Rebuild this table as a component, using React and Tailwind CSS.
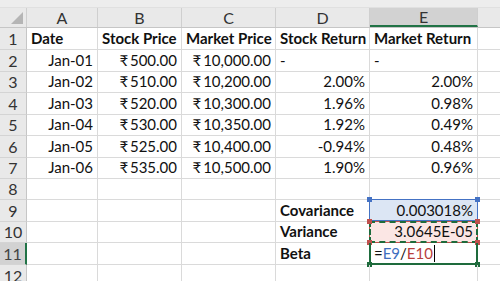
import React from 'react'

const cols = [71, 84, 94, 94, 108]
const rowHeights = [22, 22, 21, 22, 21, 22, 21, 21, 22, 21, 22, 22]
const R = '₹\u2009'

const rows = [
  [
    { t: 'Date', b: true },
    { t: 'Stock Price', b: true },
    { t: 'Market Price', b: true },
    { t: 'Stock Return', b: true },
    { t: 'Market Return', b: true },
  ],
  [{ t: 'Jan-01', r: true }, { t: R + '500.00', r: true }, { t: R + '10,000.00', r: true }, { t: '-' }, { t: '-' }],
  [{ t: 'Jan-02', r: true }, { t: R + '510.00', r: true }, { t: R + '10,200.00', r: true }, { t: '2.00%', r: true }, { t: '2.00%', r: true }],
  [{ t: 'Jan-03', r: true }, { t: R + '520.00', r: true }, { t: R + '10,300.00', r: true }, { t: '1.96%', r: true }, { t: '0.98%', r: true }],
  [{ t: 'Jan-04', r: true }, { t: R + '530.00', r: true }, { t: R + '10,350.00', r: true }, { t: '1.92%', r: true }, { t: '0.49%', r: true }],
  [{ t: 'Jan-05', r: true }, { t: R + '525.00', r: true }, { t: R + '10,400.00', r: true }, { t: '-0.94%', r: true }, { t: '0.48%', r: true }],
  [{ t: 'Jan-06', r: true }, { t: R + '535.00', r: true }, { t: R + '10,500.00', r: true }, { t: '1.90%', r: true }, { t: '0.96%', r: true }],
  [{}, {}, {}, {}, {}],
  [{}, {}, {}, { t: 'Covariance', b: true }, { t: '0.003018%', r: true, sel: 'blue' }],
  [{}, {}, {}, { t: 'Variance', b: true }, { t: '3.0645E-05', r: true, sel: 'red' }],
  [{}, {}, {}, { t: 'Beta', b: true }, { sel: 'edit' }],
  [{}, {}, {}, {}, {}],
]

// small square grips at the corners of a selection
function Handle({ className }) {
  return <span className={`absolute w-[5px] h-[5px] ${className}`} />
}

function Cell({ c, w, h }) {
  const base = 'relative shrink-0 border-r border-b border-[#dadada] flex items-end pb-[2px] px-[4px] text-[15px] leading-[18px] text-[#111] whitespace-nowrap'
  let extra = ''
  if (c.sel === 'blue') extra = 'bg-[#dce6f4]'
  if (c.sel === 'red') extra = 'bg-[#fbe6e4]'
  return (
    <div className={`${base} ${c.r ? 'justify-end' : 'justify-start'} ${c.b ? 'font-bold' : ''} ${extra}`} style={{ width: w, height: h }}>
      {c.sel === 'edit' ? (
        <span className="flex items-end">
          <span>=</span>
          <span className="text-[#3f6fbf]">E9</span>
          <span>/</span>
          <span className="text-[#b8403c]">E10</span>
          <span className="w-[1px] h-[17px] bg-black ml-[1px]" />
        </span>
      ) : (
        <span>{c.t}</span>
      )}
      {c.sel === 'blue' && (
        <>
          <span className="absolute left-[-1px] top-[-1px] right-[-1px] bottom-0 border border-[#4472c4]" />
          <Handle className="bg-[#4472c4] left-[-3px] top-[-3px]" />
          <Handle className="bg-[#4472c4] right-[-3px] top-[-3px]" />
        </>
      )}
      {c.sel === 'red' && (
        <>
          <span className="absolute left-[-1px] top-[-1px] right-[-1px] bottom-[-1px] border border-[#c0504d]" />
          <span className="absolute left-[-1px] top-[-1px] right-[-1px] bottom-[-1px] border-2 border-dashed border-[#1e6b3c]" />
          <Handle className="bg-[#c0504d] left-[-3px] top-[-3px]" />
          <Handle className="bg-[#c0504d] right-[-3px] top-[-3px]" />
          <Handle className="bg-[#c0504d] left-[-3px] bottom-[-3px]" />
          <Handle className="bg-[#c0504d] right-[-3px] bottom-[-3px]" />
        </>
      )}
      {c.sel === 'edit' && (
        <>
          <span className="absolute left-[-1px] top-0 right-[-1px] bottom-[-1px] border-2 border-t-0 border-[#1e6b3c]" />
          <Handle className="bg-[#1e6b3c] right-[-3px] bottom-[-3px]" />
          <Handle className="bg-[#1e6b3c] left-[-3px] bottom-[-3px]" />
        </>
      )}
    </div>
  )
}

export default function App() {
  const font = { fontFamily: 'Lato, "Open Sans", sans-serif' }
  return (
    <div className="w-[500px] h-[281px] overflow-hidden bg-white" style={font}>
      <div className="h-[8px] bg-[#ededed] border-b border-[#e0e0e0]" />
      {/* column headers */}
      <div className="flex h-[20px] bg-[#e9e9e9] border-b border-[#c6c6c6]">
        <div className="relative w-[27px] shrink-0 border-r border-[#cfcfcf]">
          <span className="absolute right-[3px] bottom-[3px] w-0 h-0 border-l-[12px] border-l-transparent border-b-[12px] border-b-[#b5b5b5]" />
        </div>
        {['A', 'B', 'C', 'D', 'E'].map((l, i) => (
          <div
            key={l}
            className={`shrink-0 flex items-center justify-center text-[16px] text-[#333] border-r border-[#cfcfcf] ${l === 'E' ? 'bg-[#d2d2d2] border-b-2 border-b-[#217346] text-[#1f5e38]' : ''}`}
            style={{ width: cols[i] }}
          >
            {l}
          </div>
        ))}
        <div className="flex-1" />
      </div>
      {rows.map((row, ri) => (
        <div key={ri} className="flex">
          <div
            className={`shrink-0 w-[27px] flex items-end justify-center pb-[1px] text-[16px] leading-[19px] border-b border-[#d4d4d4] ${ri === 10 ? 'bg-[#d2d2d2] border-r-2 border-r-[#217346] text-[#444]' : 'bg-[#e9e9e9] border-r border-r-[#c6c6c6] text-[#333]'}`}
            style={{ height: rowHeights[ri] }}
          >
            {ri + 1}
          </div>
          {row.map((c, ci) => (
            <Cell key={ci} c={c} w={cols[ci]} h={rowHeights[ri]} />
          ))}
          <div className="flex-1 border-b border-[#dadada]" style={{ height: rowHeights[ri] }} />
        </div>
      ))}
    </div>
  )
}
